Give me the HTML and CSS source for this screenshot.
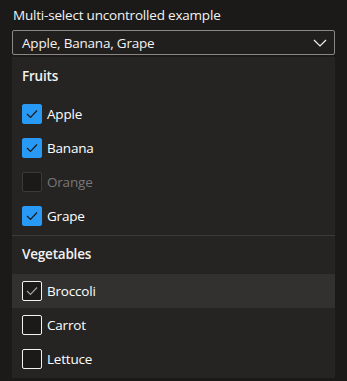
FILE: index.html
```html
<!DOCTYPE html>
<html lang="en">
<head>
  <meta charset="UTF-8"/>
  <title>Multi-select dropdown</title>
  <link rel="stylesheet" href="styles.css">
</head>
<body>
  <div class="field">
    <label class="field-label">Multi-select uncontrolled example</label>
    <div class="dropdown">
      <span class="dropdown-title">Apple, Banana, Grape</span>
      <svg class="chevron" width="14" height="8" viewBox="0 0 14 8">
        <polyline points="1,1 7,7 13,1" fill="none" stroke="#f3f2f1" stroke-width="1.2"/>
      </svg>
    </div>

    <!-- Callout list -->
    <div class="callout">
      <div class="group-header first">Fruits</div>
      <div class="option checked">
        <span class="box"><svg width="12" height="10" viewBox="0 0 12 10"><polyline points="1,5 4.5,8.5 11,1.5" fill="none" stroke="#1b1a19" stroke-width="1.2"/></svg></span>
        <span class="option-text">Apple</span>
      </div>
      <div class="option checked">
        <span class="box"><svg width="12" height="10" viewBox="0 0 12 10"><polyline points="1,5 4.5,8.5 11,1.5" fill="none" stroke="#1b1a19" stroke-width="1.2"/></svg></span>
        <span class="option-text">Banana</span>
      </div>
      <div class="option disabled">
        <span class="box"></span>
        <span class="option-text">Orange</span>
      </div>
      <div class="option checked">
        <span class="box"><svg width="12" height="10" viewBox="0 0 12 10"><polyline points="1,5 4.5,8.5 11,1.5" fill="none" stroke="#1b1a19" stroke-width="1.2"/></svg></span>
        <span class="option-text">Grape</span>
      </div>
      <div class="divider"></div>
      <div class="group-header">Vegetables</div>
      <div class="option hover">
        <span class="box"><svg width="12" height="10" viewBox="0 0 12 10"><polyline points="1,5 4.5,8.5 11,1.5" fill="none" stroke="#a19f9d" stroke-width="1.2"/></svg></span>
        <span class="option-text">Broccoli</span>
      </div>
      <div class="option">
        <span class="box"></span>
        <span class="option-text">Carrot</span>
      </div>
      <div class="option">
        <span class="box"></span>
        <span class="option-text">Lettuce</span>
      </div>
    </div>
  </div>
</body>
</html>
```

FILE: styles.css
```css
:root {
  --body-bg: #1b1a19;
  --surface: #252423;
  --hover: #323130;
  --divider: #3b3a39;
  --border: #8a8886;
  --primary: #2899f5;
  --text: #ffffff;
  --text-soft: #f3f2f1;
  --text-disabled: #797775;
}

* {
  box-sizing: border-box;
  margin: 0;
  padding: 0;
}

body {
  background: var(--body-bg);
  color: var(--text);
  font-family: "Open Sans", "Noto Sans", sans-serif;
  font-size: 13.5px;
  letter-spacing: -0.2px;
  line-height: 20px;
  padding: 0 12px;
  overflow: hidden;
}

/*—— LABEL + BOX ——*/
.field-label {
  display: block;
  padding: 5px 1px;
  color: var(--text-soft);
}

.dropdown {
  height: 25px;
  border: 1px solid var(--border);
  border-radius: 2px;
  background: #201f1e;
  display: flex;
  align-items: center;
  justify-content: space-between;
  padding: 0 7px 0 9px;
}
.dropdown-title {
  color: var(--text-soft);
}
.chevron {
  display: block;
}

/*—— CALLOUT ——*/
.callout {
  margin-top: 2px;
  background: var(--surface);
  padding-bottom: 2px;
}

.group-header {
  font-weight: 600;
  padding: 8px 10px 10px;
  color: var(--text-soft);
}
.group-header.first {
  padding: 9px 10px 11px;
}

.option {
  height: 34px;
  display: flex;
  align-items: center;
  gap: 5px;
  padding: 0 10px;
}
.option.hover {
  background: var(--hover);
}

.box {
  width: 20px;
  height: 20px;
  border: 1px solid var(--text-soft);
  border-radius: 2px;
  background: var(--body-bg);
  display: flex;
  align-items: center;
  justify-content: center;
  flex-shrink: 0;
}
.option.checked .box {
  background: var(--primary);
  border-color: var(--primary);
}
.option.disabled .box {
  border-color: var(--divider);
}
.option.disabled .option-text {
  color: var(--text-disabled);
}

.divider {
  height: 1px;
  background: var(--divider);
  margin: 2px 0 0;
}
```
